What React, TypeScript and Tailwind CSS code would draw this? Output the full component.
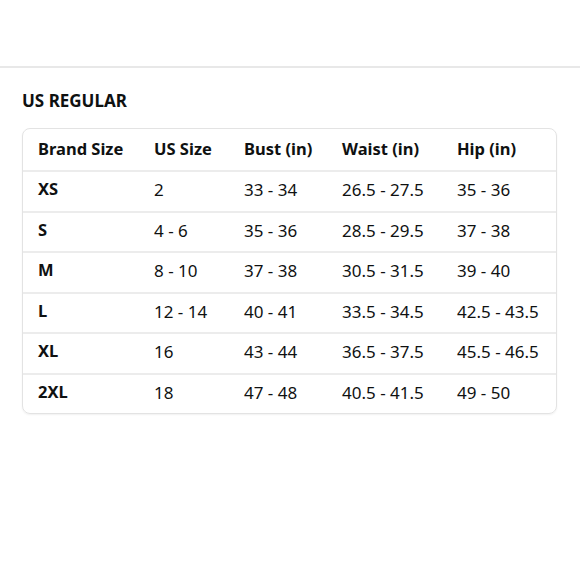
import React from 'react';

const headers = ['Brand Size', 'US Size', 'Bust (in)', 'Waist (in)', 'Hip (in)'];

const rows = [
    ['XS', '2', '33 - 34', '26.5 - 27.5', '35 - 36'],
    ['S', '4 - 6', '35 - 36', '28.5 - 29.5', '37 - 38'],
    ['M', '8 - 10', '37 - 38', '30.5 - 31.5', '39 - 40'],
    ['L', '12 - 14', '40 - 41', '33.5 - 34.5', '42.5 - 43.5'],
    ['XL', '16', '43 - 44', '36.5 - 37.5', '45.5 - 46.5'],
    ['2XL', '18', '47 - 48', '40.5 - 41.5', '49 - 50'],
];

const cols = 'grid grid-cols-[116px_90px_98px_115px_115px]';

export default function App() {
    return (
        <main
            className="w-[580px] h-[580px] bg-white text-[#0f1111]"
            style={{ fontFamily: '"Noto Sans", "Open Sans", sans-serif' }}
        >
            <div className="pt-[66px]">
                <div className="h-[2px] bg-[#e8e8e8]" />
            </div>

            <section className="px-[22px]">
                <h2 className="mt-[20px] text-[17px] font-bold leading-[26px]">US REGULAR</h2>

                <div className="mt-[14px] w-[535px] rounded-[8px] border border-[#e3e3e3] overflow-hidden shadow-[0_1px_2px_rgba(0,0,0,0.06)]">
                    <div className={`${cols} h-[41px] items-center pb-[1px] text-[16.5px] font-bold`}>
                        {headers.map((h) => (
                            <div key={h} className="pl-[15px]">{h}</div>
                        ))}
                    </div>
                    {rows.map((r) => (
                        <div
                            key={r[0]}
                            className={`${cols} h-[40.5px] items-center pb-[3px] border-t-2 border-[#ececec] text-[17px]`}
                        >
                            {r.map((c, i) => (
                                <div key={i} className={`pl-[15px] ${i === 0 ? 'font-bold text-[16.5px]' : ''}`}>{c}</div>
                            ))}
                        </div>
                    ))}
                </div>
            </section>
        </main>
    );
}
